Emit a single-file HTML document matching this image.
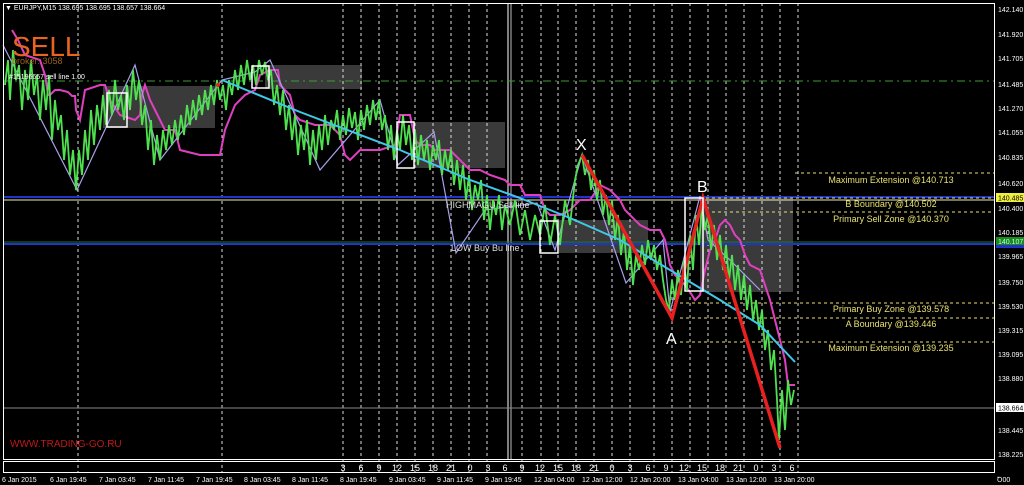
<!DOCTYPE html>
<html><head><style>
body{margin:0;background:#000;width:1024px;height:485px;overflow:hidden}
svg{display:block}
text{font-family:"Liberation Sans",sans-serif}
</style></head><body>
<svg width="1024" height="485" viewBox="0 0 1024 485" xmlns="http://www.w3.org/2000/svg">
<rect width="1024" height="485" fill="#000"/>
<g fill="#3a3a3a">
<rect x="103" y="86" width="112" height="42"/>
<rect x="265" y="65" width="97" height="24"/>
<rect x="414" y="122" width="91" height="46"/>
<rect x="559" y="220" width="89" height="33"/>
<rect x="700" y="198" width="93" height="94"/>
</g>
<g stroke="#ddd" stroke-width="1" stroke-dasharray="3,3">
<line x1="78" y1="3" x2="78" y2="472"/>
<line x1="222" y1="3" x2="222" y2="472"/>
<line x1="343" y1="3" x2="343" y2="472"/><line x1="361" y1="3" x2="361" y2="472"/><line x1="379" y1="3" x2="379" y2="472"/><line x1="397" y1="3" x2="397" y2="472"/><line x1="415" y1="3" x2="415" y2="472"/><line x1="433" y1="3" x2="433" y2="472"/><line x1="451" y1="3" x2="451" y2="472"/><line x1="469" y1="3" x2="469" y2="472"/><line x1="487" y1="3" x2="487" y2="472"/>
<line x1="522" y1="3" x2="522" y2="472"/><line x1="541" y1="3" x2="541" y2="472"/><line x1="558" y1="3" x2="558" y2="472"/><line x1="576" y1="3" x2="576" y2="472"/><line x1="594" y1="3" x2="594" y2="472"/><line x1="612" y1="3" x2="612" y2="472"/><line x1="630" y1="3" x2="630" y2="472"/><line x1="654" y1="3" x2="654" y2="472"/><line x1="672" y1="3" x2="672" y2="472"/><line x1="690" y1="3" x2="690" y2="472"/><line x1="708" y1="3" x2="708" y2="472"/><line x1="726" y1="3" x2="726" y2="472"/><line x1="744" y1="3" x2="744" y2="472"/><line x1="762" y1="3" x2="762" y2="472"/><line x1="780" y1="3" x2="780" y2="472"/><line x1="798" y1="3" x2="798" y2="472"/>
</g>
<line x1="508" y1="3" x2="508" y2="459" stroke="#fff"/><line x1="511" y1="3" x2="511" y2="459" stroke="#bbb"/>
<line x1="3" y1="81" x2="994" y2="81" stroke="#3c9a3c" stroke-dasharray="8,4,2,4"/>
<line x1="3" y1="197" x2="994" y2="197" stroke="#2233cc" stroke-width="2"/>
<line x1="3" y1="200" x2="994" y2="200" stroke="#eeeebb"/>
<line x1="3" y1="242" x2="994" y2="242" stroke="#1a7a1a"/>
<line x1="3" y1="244" x2="994" y2="244" stroke="#2233cc" stroke-width="2"/>
<line x1="3" y1="408" x2="994" y2="408" stroke="#888"/>
<g stroke="#e8e070" stroke-dasharray="3,3">
<line x1="795" y1="173" x2="994" y2="173"/><line x1="700" y1="198" x2="994" y2="198"/><line x1="700" y1="212" x2="994" y2="212"/>
<line x1="680" y1="303" x2="994" y2="303"/><line x1="680" y1="318" x2="994" y2="318"/><line x1="680" y1="342" x2="994" y2="342"/>
</g>
<g fill="#e8e070" font-size="9" text-anchor="middle">
<text x="891" y="183">Maximum Extension @140.713</text>
<text x="891" y="207">B Boundary @140.502</text>
<text x="891" y="222">Primary Sell Zone @140.370</text>
<text x="891" y="312">Primary Buy Zone @139.578</text>
<text x="891" y="327">A Boundary @139.446</text>
<text x="891" y="351">Maximum Extension @139.235</text>
</g>
<polyline fill="none" stroke="#e040c0" stroke-width="2" points="12,30 18,40 25,55 40,60 45,75 48,95 50,95 55,90 60,90 68,92 72,96 75,96 76,110 80,120 85,90 100,85 105,85 110,100 120,115 135,120 140,115 142,95 145,85 150,100 155,110 165,130 175,130 180,150 200,155 220,155 225,130 235,105 245,95 255,90 260,75 270,70 278,70 280,85 290,95 295,115 300,120 315,125 330,125 340,135 345,155 350,160 360,150 380,150 395,145 400,115 410,115 415,140 420,145 430,145 435,150 450,150 460,160 470,170 480,170 490,175 505,180 510,185 520,185 525,195 540,195 545,210 550,215 560,215 570,210 580,200 590,200 600,185 610,190 620,200 625,210 630,215 640,225 650,230 660,230 665,240 670,265 675,275 680,280 685,285 690,292 695,300 700,295 705,270 710,250 715,240 720,225 725,220 730,225 735,235 740,240 745,255 750,265 760,270 770,300 775,320 780,340 785,360 788,385 795,385"/>
<polyline fill="none" stroke="#aaa0ee" stroke-width="1.2" points="3,45 77,190 135,65 160,160 222,80 255,72 270,60 320,170 380,100 398,165 434,132 456,253 485,210 537,203 555,250 582,155 626,283 663,240 670,312 700,196 708,240 730,260 760,290"/>
<polyline fill="none" stroke="#4ee04e" stroke-width="1.8" points="5,85 8,60 10,100 13,50 16,80 19,65 22,110 25,70 28,100 31,60 34,95 37,75 40,120 43,80 46,110 49,75 52,140 55,100 58,130 61,115 64,160 67,130 70,175 73,150 76,190 79,150 82,175 85,130 88,160 91,110 94,145 97,105 100,130 103,95 106,125 109,90 112,115 115,80 118,110 121,95 124,120 127,85 130,110 133,70 136,100 139,80 142,125 145,105 148,150 151,120 154,165 157,135 160,160 163,130 166,150 169,125 172,145 175,120 178,140 181,115 184,135 187,105 190,125 193,100 196,120 199,95 202,115 205,90 208,110 211,85 214,105 217,80 220,100 223,85 226,110 229,80 232,95 235,70 238,90 241,65 244,85 247,60 250,80 253,65 256,85 259,60 262,75 265,62 268,80 271,70 274,105 277,85 280,115 283,90 286,130 289,105 292,140 295,115 298,155 301,125 304,150 307,120 310,165 313,130 316,160 319,125 322,150 325,115 328,145 331,120 334,130 337,110 340,140 343,115 346,135 349,108 352,128 355,112 358,140 361,110 364,130 367,105 370,125 373,100 376,120 379,100 382,130 385,115 388,150 391,125 394,160 397,130 400,150 403,115 406,145 409,125 412,160 415,130 418,165 421,135 424,160 427,140 430,170 433,145 436,160 439,140 442,175 445,150 448,170 451,150 454,185 457,160 460,190 463,165 466,200 469,175 472,210 475,185 478,200 481,180 484,220 487,195 490,230 493,200 496,215 499,195 502,230 505,205 510,225 515,200 520,235 525,210 530,240 535,215 540,235 545,205 550,245 555,215 560,245 565,200 570,225 575,180 578,165 582,155 585,175 588,160 591,190 594,170 597,200 600,180 603,215 606,195 609,225 612,200 615,240 618,215 621,255 624,230 627,270 630,245 633,285 636,255 639,270 642,245 645,265 648,240 651,260 654,245 657,270 660,255 663,280 666,300 669,310 672,280 675,300 678,270 681,295 684,260 687,290 690,235 693,270 696,215 699,245 702,205 705,230 708,215 711,250 714,225 717,260 720,235 723,270 726,245 729,280 732,255 735,290 738,265 741,300 744,275 747,310 750,285 753,320 756,300 759,330 762,310 765,350 768,330 771,370 774,350 777,400 779,440 782,390 785,430 788,380 791,405 794,390"/>
<polyline fill="none" stroke="#40c8e8" stroke-width="2" points="222,80 300,112 400,150 470,180 520,198 570,218 620,240 670,270 720,300 760,325 795,362"/>
<polyline fill="none" stroke="#e82020" stroke-width="3.5" points="582,155 672,318 703,198 780,448"/>
<g fill="#fff" font-size="16"><text x="576" y="150">X</text><text x="666" y="344">A</text><text x="697" y="192">B</text></g>
<g fill="none" stroke="#fff" stroke-width="1.5">
<rect x="107" y="93" width="20" height="34"/><rect x="252" y="66" width="17" height="22"/><rect x="397" y="122" width="17" height="46"/><rect x="540" y="221" width="18" height="32"/><rect x="685" y="198" width="18" height="93"/>
</g>
<circle cx="218" cy="85" r="2" fill="#e82020"/>
<g fill="#ddd" font-size="9"><text x="446" y="208">HIGHMAGU Sell line</text><text x="451" y="251">LOW Buy Bu line</text></g>
<text x="12" y="56" fill="#e86420" font-size="28">SELL</text>
<text x="12" y="64" fill="#9a6020" font-size="9">broker: 3058</text>
<text x="9" y="79" fill="#fff" font-size="7">#15196657 sell line 1.00</text>
<text x="5" y="10" fill="#fff" font-size="7">▼ EURJPY,M15  138.695 138.695 138.657 138.664</text>
<text x="10" y="447" fill="#c01818" font-size="10">WWW.TRADING-GO.RU</text>
<rect x="3.5" y="3.5" width="991" height="456" fill="none" stroke="#fff"/>
<rect x="3.5" y="461.5" width="991" height="11" fill="none" stroke="#fff"/>
<g fill="#fff" font-size="9" text-anchor="middle">
<text x="343" y="471">3</text><text x="361" y="471">6</text><text x="379" y="471">9</text><text x="397" y="471">12</text><text x="415" y="471">15</text><text x="433" y="471">18</text><text x="451" y="471">21</text><text x="470" y="471">0</text><text x="488" y="471">3</text><text x="505" y="471">6</text>
<text x="522" y="471">9</text><text x="540" y="471">12</text><text x="558" y="471">15</text><text x="576" y="471">18</text><text x="594" y="471">21</text><text x="612" y="471">0</text><text x="630" y="471">3</text><text x="648" y="471">6</text><text x="666" y="471">9</text><text x="684" y="471">12</text><text x="702" y="471">15</text><text x="720" y="471">18</text><text x="738" y="471">21</text><text x="756" y="471">0</text><text x="774" y="471">3</text><text x="792" y="471">6</text>
</g>
<g fill="#fff" font-size="7">
<text x="2" y="482">6 Jan 2015</text><text x="50" y="482">6 Jan 19:45</text><text x="99" y="482">7 Jan 03:45</text><text x="148" y="482">7 Jan 11:45</text><text x="196" y="482">7 Jan 19:45</text><text x="244" y="482">8 Jan 03:45</text><text x="292" y="482">8 Jan 11:45</text><text x="340" y="482">8 Jan 19:45</text><text x="389" y="482">9 Jan 03:45</text><text x="437" y="482">9 Jan 11:45</text><text x="485" y="482">9 Jan 19:45</text><text x="534" y="482">12 Jan 04:00</text><text x="582" y="482">12 Jan 12:00</text><text x="630" y="482">12 Jan 20:00</text><text x="678" y="482">13 Jan 04:00</text><text x="726" y="482">13 Jan 12:00</text><text x="774" y="482">13 Jan 20:00</text>
</g>
<g fill="#fff" font-size="7">
<text x="998" y="12">142.140</text><text x="998" y="37">141.920</text><text x="998" y="61">141.705</text><text x="998" y="87">141.485</text><text x="998" y="111">141.270</text><text x="998" y="135">141.055</text><text x="998" y="160">140.835</text><text x="998" y="186">140.620</text><text x="998" y="211">140.400</text><text x="998" y="235">140.185</text><text x="998" y="259">139.965</text><text x="998" y="285">139.750</text><text x="998" y="309">139.530</text><text x="998" y="333">139.315</text><text x="998" y="357">139.095</text><text x="998" y="381">138.880</text><text x="998" y="433">138.445</text><text x="998" y="457">138.225</text><text x="997" y="482">Ꝺ00</text>
</g>
<rect x="996" y="193" width="28" height="9" fill="#f0f040"/><text x="998" y="200.5" fill="#000" font-size="7">140.485</text>
<rect x="996" y="237" width="28" height="8" fill="#1a8a1a"/><rect x="996" y="245" width="28" height="3" fill="#2233cc"/><text x="998" y="244" fill="#bfe" font-size="7">140.107</text>
<rect x="996" y="403" width="28" height="9" fill="#fff"/><text x="998" y="410.5" fill="#000" font-size="7">138.664</text>
</svg>
</body></html>
